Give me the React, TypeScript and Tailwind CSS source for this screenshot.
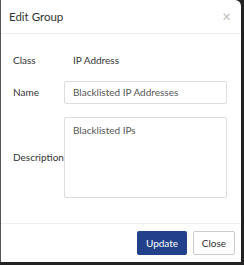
import React from 'react'

function Row({ label, children, className }: { label: string; children: React.ReactNode; className?: string }) {
    return (
        <div className={`flex items-center ${className ?? ''}`}>
            <div className="w-[51px] shrink-0 text-[#333]">{label}</div>
            <div className="flex-1">{children}</div>
        </div>
    )
}

export default function App() {
    return (
        <div className="w-[244px] h-[265px] bg-[#222] overflow-hidden" style={{ fontFamily: 'Lato, sans-serif' }}>
            <div className="w-[241px] h-[262px] bg-white rounded-tr-[6px] border-l border-l-[#555] flex flex-col text-[10px]">
                <div className="h-[34px] shrink-0 flex items-center justify-between pl-[8px] pr-[10px] border-b border-[#eee]">
                    <span className="text-[11.5px] text-[#333]">Edit Group</span>
                    <span className="text-[15px] text-[#bbb] leading-none">×</span>
                </div>
                <div className="flex-1 pt-[16px] pl-[12px] pr-[14px]">
                    <Row label="Class" className="h-[20px]">
                        <span className="pl-[9px] text-[#333]">IP Address</span>
                    </Row>
                    <Row label="Name" className="mt-[11px]">
                        <div className="h-[23px] border border-[#ddd] rounded-[2px] flex items-center pl-[8px] text-[#555]">
                            Blacklisted IP Addresses
                        </div>
                    </Row>
                    <Row label="Description" className="mt-[13px]">
                        <div className="h-[81px] border border-[#ddd] rounded-[2px] pl-[8px] pt-[5px] text-[#555]">
                            Blacklisted IPs
                        </div>
                    </Row>
                </div>
                <div className="h-[39px] shrink-0 border-t border-[#eee] flex items-center justify-end gap-[6px] pr-[6px]">
                    <button className="h-[24px] w-[50px] bg-[#22418a] text-white rounded-[2px]">Update</button>
                    <button className="h-[24px] w-[42px] bg-white border border-[#ccc] text-[#333] rounded-[2px]">Close</button>
                </div>
            </div>
        </div>
    )
}
